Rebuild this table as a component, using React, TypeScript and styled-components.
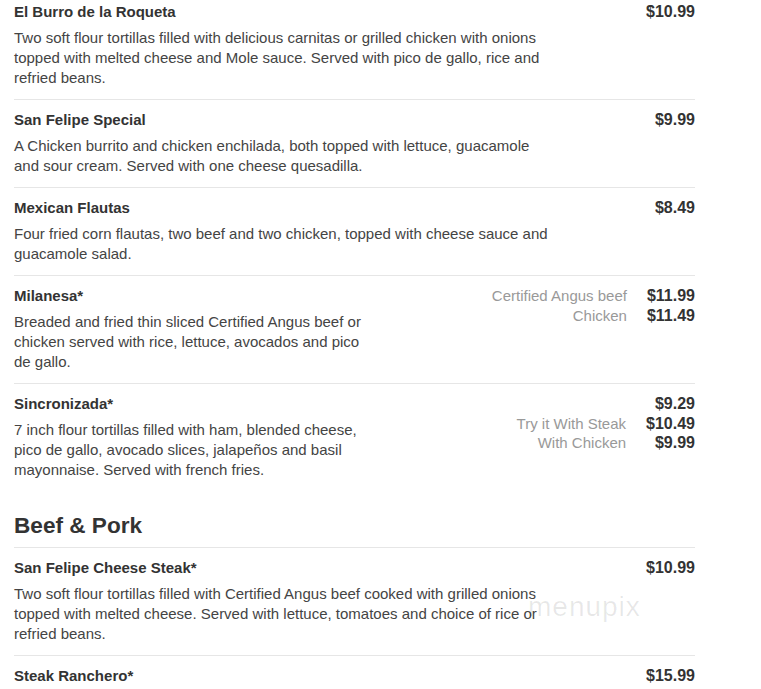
import React from 'react'
import styled, { createGlobalStyle } from 'styled-components'

type Option = { label?: string; price: string }
type Item = { name: string; desc: string; prices: Option[]; narrow?: boolean }

const dishes: Item[] = [
  {
    name: 'El Burro de la Roqueta',
    desc: 'Two soft flour tortillas filled with delicious carnitas or grilled chicken with onions topped with melted cheese and Mole sauce. Served with pico de gallo, rice and refried beans.',
    prices: [ { price: '$10.99' } ],
  },
  {
    name: 'San Felipe Special',
    desc: 'A Chicken burrito and chicken enchilada, both topped with lettuce, guacamole and sour cream. Served with one cheese quesadilla.',
    prices: [ { price: '$9.99' } ],
  },
  {
    name: 'Mexican Flautas',
    desc: 'Four fried corn flautas, two beef and two chicken, topped with cheese sauce and guacamole salad.',
    prices: [ { price: '$8.49' } ],
  },
  {
    name: 'Milanesa*',
    desc: 'Breaded and fried thin sliced Certified Angus beef or chicken served with rice, lettuce, avocados and pico de gallo.',
    prices: [
      { label: 'Certified Angus beef', price: '$11.99' },
      { label: 'Chicken', price: '$11.49' },
    ],
    narrow: true,
  },
  {
    name: 'Sincronizada*',
    desc: '7 inch flour tortillas filled with ham, blended cheese, pico de gallo, avocado slices, jalapeños and basil mayonnaise. Served with french fries.',
    prices: [
      { price: '$9.29' },
      { label: 'Try it With Steak', price: '$10.49' },
      { label: 'With Chicken', price: '$9.99' },
    ],
    narrow: true,
  },
]

const beefPork: Item[] = [
  {
    name: 'San Felipe Cheese Steak*',
    desc: 'Two soft flour tortillas filled with Certified Angus beef cooked with grilled onions topped with melted cheese. Served with lettuce, tomatoes and choice of rice or refried beans.',
    prices: [ { price: '$10.99' } ],
  },
  {
    name: 'Steak Ranchero*',
    desc: '',
    prices: [ { price: '$15.99' } ],
  },
]

const MenuRow: React.FC<{ item: Item; last?: boolean }> = ({ item, last }) => (
  <Row $last={ last }>
    <Info $narrow={ item.narrow }>
      <Name>{ item.name }</Name>
      { item.desc && <Desc>{ item.desc }</Desc> }
    </Info>
    <Prices>
      { item.prices.map((p, i) =>
        <React.Fragment key={ i }>
          <OptLabel>{ p.label ?? '' }</OptLabel>
          <Price>{ p.price }</Price>
        </React.Fragment>
      ) }
    </Prices>
  </Row>
)

const App: React.FC = () => (
  <>
    <GlobalStyle />
    <Page>
      <Section $top>
        { dishes.map((d, i) =>
          <MenuRow key={ i } item={ d } last={ i === dishes.length - 1 } />
        ) }
      </Section>
      <Heading>Beef &amp; Pork</Heading>
      <Section>
        { beefPork.map((d, i) => <MenuRow key={ i } item={ d } />) }
      </Section>
      <Watermark>menupix</Watermark>
    </Page>
  </>
)

const GlobalStyle = createGlobalStyle`
  html, body {
    margin: 0;
    padding: 0;
    background: #fff;
  }
  body {
    font-family: "Liberation Sans", Arial, sans-serif;
    color: #333;
  }
`

const Page = styled.div`
  position: relative;
  width: 681px;
  padding: 0 0 0 14px;
`

const Section = styled.div<{ $top?: boolean }>`
  display: flex;
  flex-direction: column;
  ${ p => p.$top && '& > :first-child { padding-top: 2px; }' }
`

const Row = styled.div<{ $last?: boolean }>`
  display: flex;
  justify-content: space-between;
  align-items: flex-start;
  padding: 10px 0 11px;
  border-bottom: ${ p => p.$last ? 'none' : '1px solid #e6e6e6' };
`

const Info = styled.div<{ $narrow?: boolean }>`
  width: ${ p => p.$narrow ? '358px' : '542px' };
`

const Name = styled.div`
  font-size: 15px;
  font-weight: bold;
  line-height: 20px;
  color: #333;
`

const Desc = styled.div`
  margin-top: 6px;
  font-size: 15px;
  line-height: 20px;
  color: #444;
`

const Prices = styled.div`
  display: grid;
  grid-template-columns: auto auto;
  column-gap: 20px;
  justify-items: end;
  align-items: baseline;
  line-height: 19.6px;
`

const OptLabel = styled.span`
  font-size: 15px;
  color: #999;
`

const Price = styled.span`
  font-size: 16px;
  font-weight: bold;
  color: #333;
`

const Heading = styled.h2`
  margin: 0;
  padding: 22px 0 8px;
  font-size: 22.6px;
  font-weight: bold;
  line-height: 26px;
  color: #333;
  border-bottom: 1px solid #e6e6e6;
`

const Watermark = styled.div`
  position: absolute;
  left: 528px;
  top: 591px;
  font-size: 28px;
  letter-spacing: 1px;
  color: rgba(0, 0, 0, 0.09);
  pointer-events: none;
`

export default App
